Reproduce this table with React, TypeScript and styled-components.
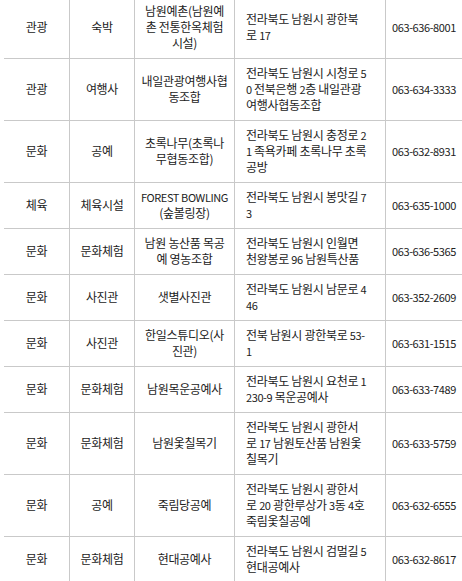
import React from "react";
import styled, { createGlobalStyle } from "styled-components";

const GlobalStyle = createGlobalStyle`
  html, body {
    margin: 0;
    padding: 0;
    background: #fff;
    overflow: hidden;
  }
  body {
    font-family: "Noto Sans CJK KR", "Noto Sans", sans-serif;
    font-size: 12px;
    letter-spacing: -0.3px;
    color: #222;
  }
`;

const SWrapper = styled.div`
  margin-top: -4px;
  padding-left: 4px;
`;

const STable = styled.div`
  display: flex;
  flex-direction: column;
  gap: 1px;
  padding-top: 1px;
  background: #c9c9c9;
`;

const SRow = styled.div`
  display: grid;
  grid-template-columns: 65px 64px 99px 150px 76px;
  gap: 1px;
`;

const SCell = styled.div<{ $align?: "left" | "center" }>`
  display: flex;
  align-items: center;
  justify-content: ${(p) => (p.$align === "left" ? "flex-start" : "center")};
  background: #fff;
  padding: 6px 0 7px;
  padding-left: ${(p) => (p.$align === "left" ? "11px" : "0")};
  line-height: 16px;
  overflow: hidden;
  min-width: 0;
`;

const SText = styled.div<{ $align?: "left" | "center" }>`
  text-align: ${(p) => p.$align || "center"};
  white-space: pre;
`;

// latin letters and digits sit a little smaller than the hangul
const SLatin = styled.span`
  font-size: 11px;
  letter-spacing: -0.4px;
`;

interface Place {
  category: string;
  kind: string;
  name: string;
  address: string;
  phone: string;
}

// line breaks follow the original page's wrapping
const places: Place[] = [
  {
    category: "관광",
    kind: "숙박",
    name: "남원예촌(남원예\n촌 전통한옥체험\n시설)",
    address: "전라북도 남원시 광한북\n로 17",
    phone: "063-636-8001",
  },
  {
    category: "관광",
    kind: "여행사",
    name: "내일관광여행사협\n동조합",
    address: "전라북도 남원시 시청로 5\n0 전북은행 2층 내일관광\n여행사협동조합",
    phone: "063-634-3333",
  },
  {
    category: "문화",
    kind: "공예",
    name: "초록나무(초록나\n무협동조합)",
    address: "전라북도 남원시 충정로 2\n1 족욕카페 초록나무 초록\n공방",
    phone: "063-632-8931",
  },
  {
    category: "체육",
    kind: "체육시설",
    name: "FOREST BOWLING\n(숲볼링장)",
    address: "전라북도 남원시 봉맛길 7\n3",
    phone: "063-635-1000",
  },
  {
    category: "문화",
    kind: "문화체험",
    name: "남원 농산품 목공\n예 영농조합",
    address: "전라북도 남원시 인월면\n천왕봉로 96 남원특산품",
    phone: "063-636-5365",
  },
  {
    category: "문화",
    kind: "사진관",
    name: "샛별사진관",
    address: "전라북도 남원시 남문로 4\n46",
    phone: "063-352-2609",
  },
  {
    category: "문화",
    kind: "사진관",
    name: "한일스튜디오(사\n진관)",
    address: "전북 남원시 광한북로 53-\n1",
    phone: "063-631-1515",
  },
  {
    category: "문화",
    kind: "문화체험",
    name: "남원목운공예사",
    address: "전라북도 남원시 요천로 1\n230-9 목운공예사",
    phone: "063-633-7489",
  },
  {
    category: "문화",
    kind: "문화체험",
    name: "남원옻칠목기",
    address: "전라북도 남원시 광한서\n로 17 남원토산품 남원옻\n칠목기",
    phone: "063-633-5759",
  },
  {
    category: "문화",
    kind: "공예",
    name: "죽림당공예",
    address: "전라북도 남원시 광한서\n로 20 광한루상가 3동 4호\n죽림옻칠공예",
    phone: "063-632-6555",
  },
  {
    category: "문화",
    kind: "문화체험",
    name: "현대공예사",
    address: "전라북도 남원시 검멀길 5\n현대공예사",
    phone: "063-632-8617",
  },
];

function withLatin(text: string) {
  return text
    .split(/([0-9A-Za-z-]+(?: [0-9A-Za-z-]+)*)/)
    .map((part, i) =>
      i % 2 ? <SLatin key={i}>{part}</SLatin> : part
    );
}

function Cell({ text, align }: { text: string; align?: "left" | "center" }) {
  return (
    <SCell $align={align}>
      <SText $align={align}>{withLatin(text)}</SText>
    </SCell>
  );
}

function App() {
  return (
    <SWrapper>
      <GlobalStyle />
      <STable>
        {places.map((place, i) => (
          <SRow key={i}>
            <Cell text={place.category} />
            <Cell text={place.kind} />
            <Cell text={place.name} />
            <Cell text={place.address} align="left" />
            <Cell text={place.phone} />
          </SRow>
        ))}
      </STable>
    </SWrapper>
  );
}

export default App;
